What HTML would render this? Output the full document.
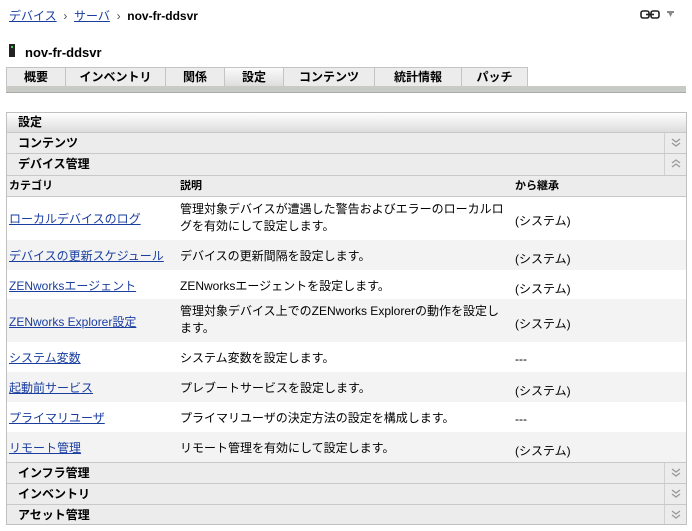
<!DOCTYPE html><html><head><meta charset="utf-8"><style>
*{margin:0;padding:0;box-sizing:border-box}
body{width:692px;height:531px;background:#fff;font-family:"Liberation Sans","Noto Sans CJK JP",sans-serif;font-size:12px;color:#000;position:relative;overflow:hidden}
.a{position:absolute}
a{color:#1a3ea0;text-decoration:underline}
.tab{position:absolute;top:67px;height:20px;border:1px solid #c4c4c4;border-bottom:none;background:#ececec;font-weight:bold;text-align:center;line-height:18px;font-size:12px}
.row{position:absolute;left:7px;width:679px}
.sec{background:#ececec;border-top:1px solid #c8c8c8;font-weight:bold;padding-left:11px;line-height:20px}
.arr{position:absolute;right:0;top:0;width:22px;height:100%;border-left:1px solid #d0d0d0}
.arr svg{position:absolute;left:6px;top:5px}
.d{position:absolute;left:173px}
.i{position:absolute;left:508px}
.c{position:absolute;left:2px}
</style></head><body>
<div class="a" style="left:9px;top:7px"><a>デバイス</a> <span style="color:#555">&nbsp;›&nbsp;</span> <a>サーバ</a> <span style="color:#555">&nbsp;›&nbsp;</span> <b>nov-fr-ddsvr</b></div>
<svg class="a" style="left:640px;top:10px" width="20" height="9" viewBox="0 0 20 9"><rect x="1" y="1" width="8" height="7" rx="2" fill="none" stroke="#222" stroke-width="1.6"/><rect x="11" y="1" width="8" height="7" rx="2" fill="none" stroke="#222" stroke-width="1.6"/><line x1="6" y1="4.5" x2="14" y2="4.5" stroke="#222" stroke-width="1.6"/></svg>
<svg class="a" style="left:667px;top:11px" width="7" height="7"><path d="M0 0H7V2H0Z M1.5 2H5.5L3.5 6Z" fill="#888"/></svg>
<div class="a" style="left:9px;top:44px;width:6px;height:13px;background:#222"></div>
<div class="a" style="left:11px;top:46px;width:2px;height:2px;background:#4c4"></div>
<div class="a" style="left:25px;top:45px;font-weight:bold;font-size:13px">nov-fr-ddsvr</div>
<div class="tab" style="left:6px;width:60px">概要</div>
<div class="tab" style="left:65px;width:101px">インベントリ</div>
<div class="tab" style="left:165px;width:60px">関係</div>
<div class="tab" style="left:224px;width:60px;background:linear-gradient(#fafafa,#dcdcdc)">設定</div>
<div class="tab" style="left:283px;width:92px">コンテンツ</div>
<div class="tab" style="left:374px;width:88px">統計情報</div>
<div class="tab" style="left:461px;width:67px">パッチ</div>
<div class="a" style="left:6px;top:86px;width:680px;height:7px;background:#c8cac6;border-bottom:1px solid #aaa"></div>
<div class="a" style="left:6px;top:112px;width:681px;height:413px;border:1px solid #c0c0c0"></div>
<div class="row" style="top:113px;height:19px;background:linear-gradient(#fff,#dcdcdc);font-weight:bold;padding-left:11px;line-height:19px">設定</div>
<div class="row sec" style="top:132px;height:21px">コンテンツ<div class="arr"><svg width="10" height="10"><path d="M1 1L5 4L9 1M1 5L5 8L9 5" fill="none" stroke="#999" stroke-width="1.3"/></svg></div></div>
<div class="row sec" style="top:153px;height:22px">デバイス管理<div class="arr"><svg width="10" height="10"><path d="M1 4L5 1L9 4M1 8L5 5L9 8" fill="none" stroke="#999" stroke-width="1.3"/></svg></div></div>
<div class="row" style="top:175px;height:22px;background:#ececec;border-top:1px solid #c8c8c8;border-bottom:1px solid #c8c8c8;font-weight:bold;font-size:11px;line-height:20px"><span class="c">カテゴリ</span><span class="d">説明</span><span class="i">から継承</span></div>
<div class="row" style="top:197px;height:43px;background:#fff"><a class="c" style="top:13px">ローカルデバイスのログ</a><span class="d" style="top:4px;line-height:17px;width:330px">管理対象デバイスが遭遇した警告およびエラーのローカルログを有効にして設定します。</span><span class="i" style="top:15px">(システム)</span></div>
<div class="row" style="top:240px;height:30px;background:#f3f3f3"><a class="c" style="top:7px">デバイスの更新スケジュール</a><span class="d" style="top:7px">デバイスの更新間隔を設定します。</span><span class="i" style="top:10px">(システム)</span></div>
<div class="row" style="top:270px;height:29px;background:#fff"><a class="c" style="top:7px">ZENworksエージェント</a><span class="d" style="top:7px">ZENworksエージェントを設定します。</span><span class="i" style="top:10px">(システム)</span></div>
<div class="row" style="top:299px;height:43px;background:#f3f3f3"><a class="c" style="top:14px">ZENworks Explorer設定</a><span class="d" style="top:4px;line-height:17px;width:322px">管理対象デバイス上でのZENworks Explorerの動作を設定します。</span><span class="i" style="top:16px">(システム)</span></div>
<div class="row" style="top:342px;height:30px;background:#fff"><a class="c" style="top:7px">システム変数</a><span class="d" style="top:7px">システム変数を設定します。</span><span class="i" style="top:10px">---</span></div>
<div class="row" style="top:372px;height:30px;background:#f3f3f3"><a class="c" style="top:7px">起動前サービス</a><span class="d" style="top:7px">プレブートサービスを設定します。</span><span class="i" style="top:10px">(システム)</span></div>
<div class="row" style="top:402px;height:30px;background:#fff"><a class="c" style="top:7px">プライマリユーザ</a><span class="d" style="top:7px">プライマリユーザの決定方法の設定を構成します。</span><span class="i" style="top:10px">---</span></div>
<div class="row" style="top:432px;height:30px;background:#f3f3f3"><a class="c" style="top:7px">リモート管理</a><span class="d" style="top:7px">リモート管理を有効にして設定します。</span><span class="i" style="top:10px">(システム)</span></div>
<div class="row sec" style="top:462px;height:21px">インフラ管理<div class="arr"><svg width="10" height="10"><path d="M1 1L5 4L9 1M1 5L5 8L9 5" fill="none" stroke="#999" stroke-width="1.3"/></svg></div></div>
<div class="row sec" style="top:483px;height:21px">インベントリ<div class="arr"><svg width="10" height="10"><path d="M1 1L5 4L9 1M1 5L5 8L9 5" fill="none" stroke="#999" stroke-width="1.3"/></svg></div></div>
<div class="row sec" style="top:504px;height:20px">アセット管理<div class="arr"><svg width="10" height="10"><path d="M1 1L5 4L9 1M1 5L5 8L9 5" fill="none" stroke="#999" stroke-width="1.3"/></svg></div></div>
</body></html>
